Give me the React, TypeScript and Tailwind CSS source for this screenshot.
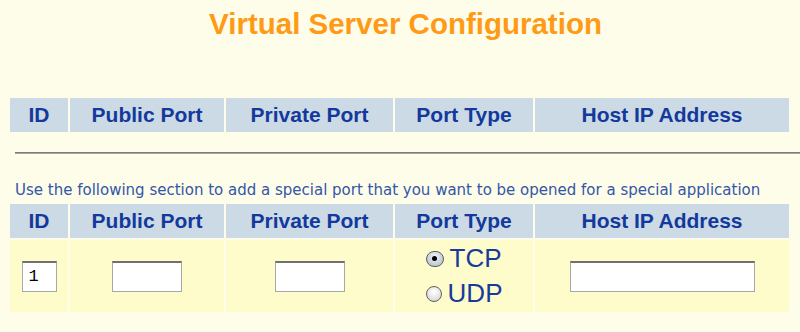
import { useState } from 'react'

const cols = 'grid grid-cols-[58px_154px_167px_138px_254px] gap-[2px]'
const headers = ['ID', 'Public Port', 'Private Port', 'Port Type', 'Host IP Address']

function HeaderRow() {
  return (
    <>
      {headers.map((h) => (
        <div
          key={h}
          className="flex h-[34px] items-center justify-center bg-[#ccdae6] text-[21px] font-bold text-[#12399b]"
        >
          {h}
        </div>
      ))}
    </>
  )
}

function TextBox({ width, value = '' }: { width: string; value?: string }) {
  return (
    <input
      type="text"
      defaultValue={value}
      className={[
        'h-[31px] border border-[#a8a8a8] border-t-2 border-t-[#707070] bg-white px-[6px]',
        "font-['Liberation_Mono',monospace] text-[17px] text-black outline-none",
        width,
      ].join(' ')}
    />
  )
}

function Radio({ checked, onClick }: { checked: boolean; onClick: () => void }) {
  return (
    <span
      onClick={onClick}
      className={[
        'mr-[6px] flex h-[16px] w-[18px] items-center justify-center rounded-full border border-[#5f5f5f]',
        checked
          ? 'bg-[radial-gradient(circle_at_50%_35%,#f4f7fb,#a9b4c2)]'
          : 'bg-[radial-gradient(circle_at_50%_35%,#ffffff,#cfcfcf)]',
      ].join(' ')}
    >
      {checked && <span className="h-[5px] w-[5px] rounded-full bg-black" />}
    </span>
  )
}

export default function App() {
  const [portType, setPortType] = useState<'TCP' | 'UDP'>('TCP')

  return (
    <div className="h-[332px] w-[800px] overflow-hidden bg-[#fdfdea] font-['Liberation_Sans',Arial,sans-serif]">
      <h1 className="pl-[11px] pt-[7px] text-center text-[29.5px] font-bold leading-[34px] text-[#ff9a16]">
        Virtual Server Configuration
      </h1>

      {/* List of existing entries (empty) */}
      <div className={`${cols} ml-[10px] mt-[57px]`}>
        <HeaderRow />
      </div>

      <div className="ml-[15px] mt-[20px] h-[2px] border-t border-b border-t-[#7c7c7c] border-b-[#a4a4a4]" />

      <p className="ml-[15px] mt-[27px] whitespace-nowrap font-['DejaVu_Sans',sans-serif] text-[15px] leading-[18px] text-[#3456a6]">
        Use the following section to add a special port that you want to be opened for a special application
      </p>

      {/* Add entry */}
      <div className={`${cols} ml-[10px] mt-[5px]`}>
        <HeaderRow />
        <div className="flex h-[72px] items-center justify-center bg-[#fefccb]">
          <TextBox width="w-[35px]" value="1" />
        </div>
        <div className="flex items-center justify-center bg-[#fefccb]">
          <TextBox width="w-[70px]" />
        </div>
        <div className="flex items-center justify-center bg-[#fefccb]">
          <TextBox width="w-[70px]" />
        </div>
        <div className="flex flex-col items-center justify-center bg-[#fefccb] text-[26px] leading-[35px] text-[#173b9b]">
          {(['TCP', 'UDP'] as const).map((t) => (
            <div key={t} className="flex w-[77px] items-center">
              <Radio checked={portType === t} onClick={() => setPortType(t)} />
              {t}
            </div>
          ))}
        </div>
        <div className="flex items-center justify-center bg-[#fefccb]">
          <TextBox width="w-[185px]" />
        </div>
      </div>
    </div>
  )
}
